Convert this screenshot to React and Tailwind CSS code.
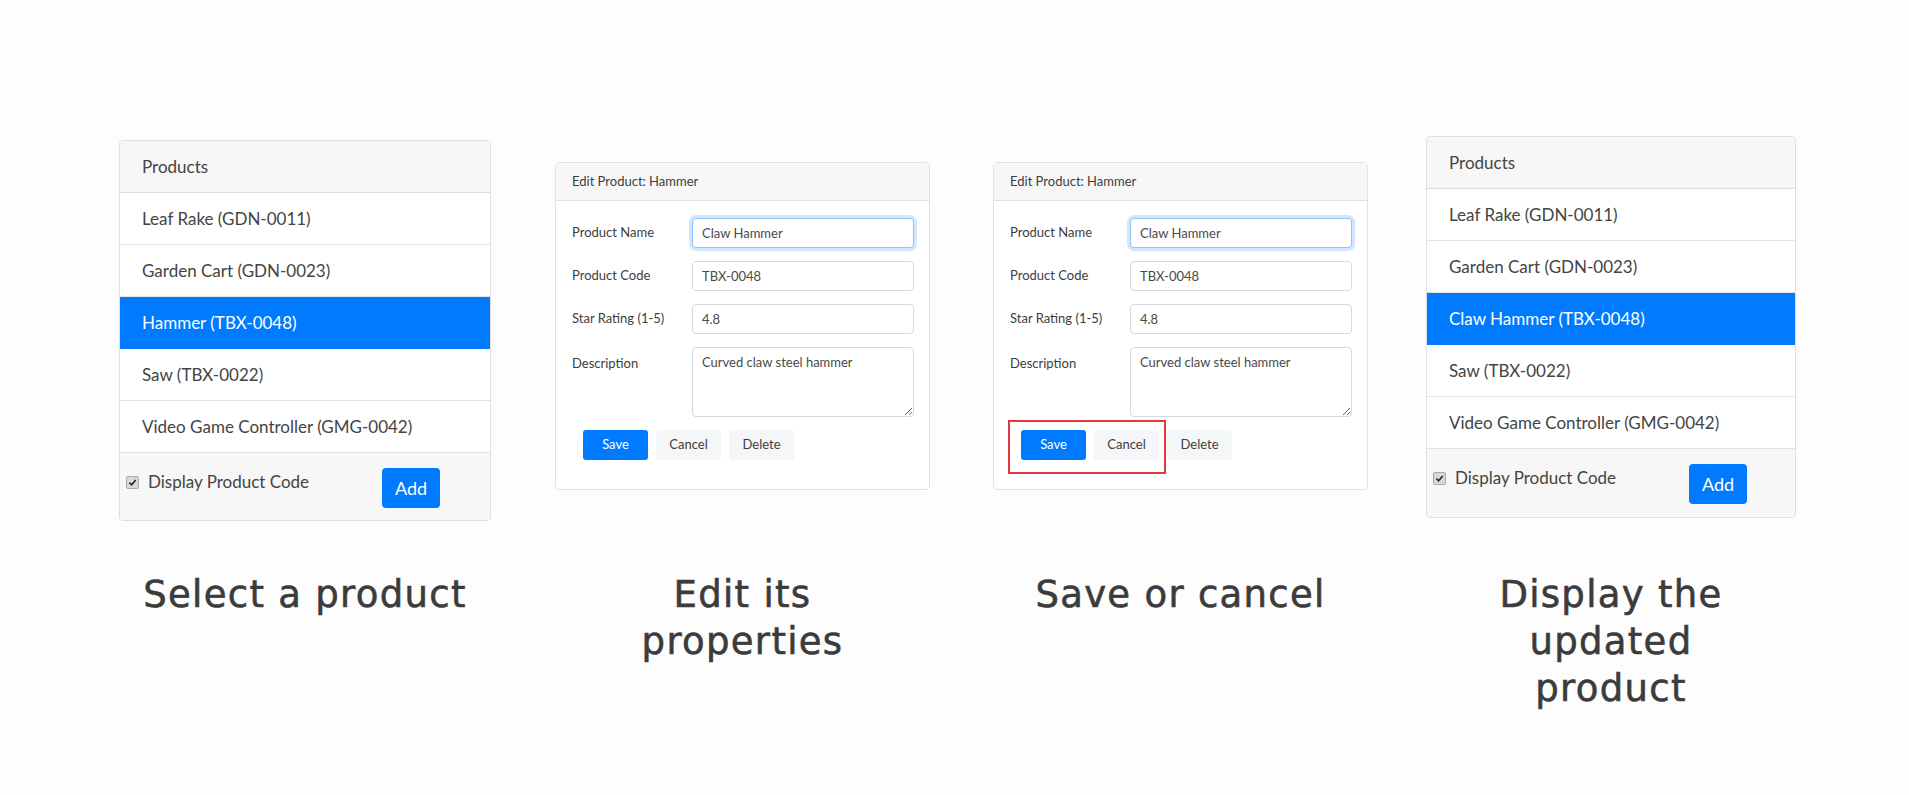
import React from "react";

const uiFont = "font-['Lato','Segoe_UI',sans-serif]";

function CheckBox() {
  return (
    <span className="w-[13px] h-[13px] rounded-[2px] bg-[#d9d9d9] border border-[#a9a9a9] flex items-center justify-center shrink-0">
      <svg width="9" height="9" viewBox="0 0 10 10">
        <path d="M1.5 5.2 L4 7.6 L8.6 2.2" fill="none" stroke="#2b2b2b" strokeWidth="1.9" />
      </svg>
    </span>
  );
}

function ProductsPanel({ items, selected, headerH, footerH }) {
  return (
    <div className={`w-full rounded-[4px] border border-[#dfdfdf] bg-white overflow-hidden text-[17px] text-[#444444] ${uiFont}`}>
      <div className={`${headerH} flex items-center px-[22px] bg-[#f7f7f7] border-b border-[#dcdcdc]`}>Products</div>
      {items.map((it, i) => (
        <div
          key={it}
          className={
            i === selected
              ? "h-[52px] flex items-center px-[22px] bg-[#007bff] text-white border-b border-[#007bff]"
              : "h-[52px] flex items-center px-[22px] bg-white border-b border-[#e2e2e2]"
          }
        >
          {it}
        </div>
      ))}
      <div className={`${footerH} bg-[#f7f7f7] flex items-start`}>
        <div className="w-[262px] pl-[6px] mt-[18px] h-[22px] flex items-center gap-[9px]">
          <CheckBox />
          <span>Display Product Code</span>
        </div>
        <button className="mt-[15px] w-[58px] h-[40px] rounded-[4px] bg-[#007bff] text-white text-[18px] flex items-center justify-center">
          Add
        </button>
      </div>
    </div>
  );
}

function Field({ label, value, focused }) {
  return (
    <div className="flex items-center h-[30px] mb-[13px]">
      <div className="w-[120px] shrink-0">{label}</div>
      <input
        readOnly
        value={value}
        className={
          focused
            ? "flex-1 min-w-0 h-[30px] rounded-[4px] border border-[#8fc2f5] bg-white px-[9px] text-[13px] text-[#4a4a4a] outline-none shadow-[0_0_0_3px_rgba(0,123,255,0.18)]"
            : "flex-1 min-w-0 h-[30px] rounded-[4px] border border-[#d6d9dc] bg-white px-[9px] text-[13px] text-[#4a4a4a] outline-none"
        }
      />
    </div>
  );
}

function EditPanel({ highlight }) {
  return (
    <div className={`relative w-[375px] h-[328px] rounded-[4px] border border-[#e2e2e2] bg-white text-[13px] text-[#3d3d3d] ${uiFont}`}>
      <div className="h-[38px] bg-[#f7f7f7] border-b border-[#e0e0e0] flex items-center px-[16px]">Edit Product: Hammer</div>
      <div className="pt-[17px] pl-[16px] pr-[15px]">
        <Field label="Product Name" value="Claw Hammer" focused />
        <Field label="Product Code" value="TBX-0048" />
        <Field label="Star Rating (1-5)" value="4.8" />
        <div className="flex items-start">
          <div className="w-[120px] shrink-0 pt-[7px]">Description</div>
          <textarea
            readOnly
            value="Curved claw steel hammer"
            className="flex-1 min-w-0 h-[70px] rounded-[4px] border border-[#d6d9dc] bg-white px-[9px] py-[5px] text-[13px] text-[#4a4a4a] outline-none"
          />
        </div>
        <div className="flex gap-[8px] ml-[11px] mt-[13px]">
          <button className="w-[65px] h-[30px] rounded-[3px] bg-[#007bff] text-white text-[13px]">Save</button>
          <button className="w-[65px] h-[30px] rounded-[3px] bg-[#f5f6f7] text-[#3d3d3d] text-[13px]">Cancel</button>
          <button className="w-[65px] h-[30px] rounded-[3px] bg-[#f5f6f7] text-[#3d3d3d] text-[13px]">Delete</button>
        </div>
      </div>
      {highlight && (
        <div className="absolute left-[14px] top-[257px] w-[158px] h-[54px] border-2 border-[#e0393e]" />
      )}
    </div>
  );
}

function Caption({ children }) {
  return (
    <div className="text-center whitespace-nowrap font-['DejaVu_Sans',sans-serif] text-[37px] leading-[47px] tracking-[1.3px] text-[#3b3b3b] [-webkit-text-stroke:0.6px_#3b3b3b]">
      {children}
    </div>
  );
}

export default function App() {
  const list1 = [
    "Leaf Rake (GDN-0011)",
    "Garden Cart (GDN-0023)",
    "Hammer (TBX-0048)",
    "Saw (TBX-0022)",
    "Video Game Controller (GMG-0042)",
  ];
  const list2 = [
    "Leaf Rake (GDN-0011)",
    "Garden Cart (GDN-0023)",
    "Claw Hammer (TBX-0048)",
    "Saw (TBX-0022)",
    "Video Game Controller (GMG-0042)",
  ];
  return (
    <div className="w-[1909px] h-[795px] bg-[#fdfdfd] flex items-start pl-[119px]">
      <div className="w-[372px] flex flex-col">
        <div className="h-[571px] pt-[140px]">
          <ProductsPanel items={list1} selected={2} headerH="h-[52px]" footerH="h-[67px]" />
        </div>
        <Caption>Select a product</Caption>
      </div>
      <div className="w-[375px] ml-[64px] flex flex-col">
        <div className="h-[571px] pt-[162px]">
          <EditPanel />
        </div>
        <Caption>
          Edit its
          <br />
          properties
        </Caption>
      </div>
      <div className="w-[375px] ml-[63px] flex flex-col">
        <div className="h-[571px] pt-[162px]">
          <EditPanel highlight />
        </div>
        <Caption>Save or cancel</Caption>
      </div>
      <div className="w-[370px] ml-[58px] flex flex-col">
        <div className="h-[571px] pt-[136px]">
          <ProductsPanel items={list2} selected={2} headerH="h-[52px]" footerH="h-[68px]" />
        </div>
        <Caption>
          Display the
          <br />
          updated
          <br />
          product
        </Caption>
      </div>
    </div>
  );
}
